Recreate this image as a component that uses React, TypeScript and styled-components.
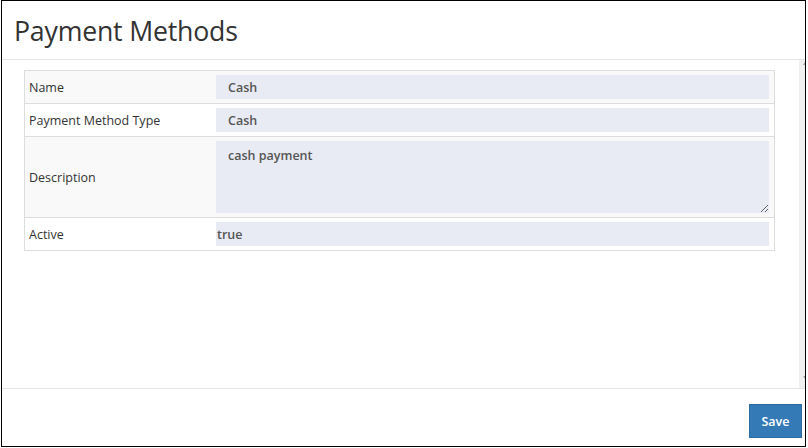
import styled, { createGlobalStyle } from "styled-components";

const GlobalStyle = createGlobalStyle`
  html, body {
    margin: 0;
    padding: 0;
    background: #fff;
  }
  body {
    font-family: "Open Sans", "Noto Sans", sans-serif;
    color: #333;
  }
`;

const fields = [
  { label: "Name", value: "Cash" },
  { label: "Payment Method Type", value: "Cash" },
];

const App = () => {
  return (
    <>
      <GlobalStyle />
      <Frame>
        <Header>
          <Title>Payment Methods</Title>
        </Header>
        <Body>
          <Content>
            <Table>
              <tbody>
                {fields.map((f, i) => (
                  <Row key={f.label} striped={i % 2 === 0}>
                    <LabelCell>{f.label}</LabelCell>
                    <ValueCell>
                      <TextInput readOnly value={f.value} />
                    </ValueCell>
                  </Row>
                ))}
                <Row striped>
                  <LabelCell>Description</LabelCell>
                  <ValueCell>
                    <TextArea readOnly value="cash payment" />
                  </ValueCell>
                </Row>
                <Row striped={false}>
                  <LabelCell>Active</LabelCell>
                  <ValueCell>
                    <TextInput readOnly value="true" flush />
                  </ValueCell>
                </Row>
              </tbody>
            </Table>
          </Content>
          <ScrollTrack>
            <Arrow up />
            <Arrow />
          </ScrollTrack>
        </Body>
        <Footer>
          <SaveButton>Save</SaveButton>
        </Footer>
      </Frame>
    </>
  );
};

export default App;

const Frame = styled.div`
  margin-left: 1px;
  width: 803px;
  height: 445px;
  border: 1px solid #000;
  display: flex;
  flex-direction: column;
  background: #fff;
`;

const Header = styled.div`
  height: 58px;
  border-bottom: 1px solid #e5e5e5;
  display: flex;
  align-items: center;
  padding-left: 12px;
`;

const Title = styled.h1`
  margin: 0;
  font-size: 26.7px;
  font-weight: 400;
  color: #333;
  letter-spacing: -0.2px;
`;

const Body = styled.div`
  flex: 1;
  display: flex;
  min-height: 0;
`;

const Content = styled.div`
  flex: 1;
  padding: 10px 0 0 22px;
`;

const Table = styled.table`
  width: 751px;
  border-collapse: collapse;
  border: 1px solid #ddd;
  font-size: 12.5px;
`;

const Row = styled.tr<{ striped: boolean }>`
  background: ${({ striped }) => (striped ? "#f9f9f9" : "#fff")};
  border-top: 1px solid #ddd;
`;

const LabelCell = styled.td`
  width: 183px;
  padding: 4px;
  color: #333;
  vertical-align: middle;
`;

const ValueCell = styled.td`
  padding: 4px 5px 4px 0;
`;

const TextInput = styled.input<{ flush?: boolean }>`
  display: block;
  box-sizing: border-box;
  width: 553px;
  height: 24px;
  border: none;
  outline: none;
  background: #e8ebf3;
  padding: 0 0 0 ${({ flush }) => (flush ? "1px" : "12px")};
  font-family: "Open Sans", "Noto Sans", sans-serif;
  font-size: 12.5px;
  font-weight: 600;
  color: #555;
`;

const TextArea = styled.textarea`
  display: block;
  box-sizing: border-box;
  width: 553px;
  height: 72px;
  border: none;
  outline: none;
  background: #e8ebf3;
  padding: 6px 12px;
  font-family: "Open Sans", "Noto Sans", sans-serif;
  font-size: 12.5px;
  font-weight: 600;
  color: #555;
  resize: vertical;
`;

const ScrollTrack = styled.div`
  width: 6px;
  background: #f0f0f0;
  display: flex;
  flex-direction: column;
  justify-content: space-between;
  align-items: flex-end;
  padding: 2px 0 9px;
`;

const Arrow = styled.div<{ up?: boolean }>`
  width: 0;
  height: 0;
  border-left: 2px solid transparent;
  border-right: 0 solid transparent;
  ${({ up }) =>
    up ? "border-bottom: 3px solid #a0a0a0;" : "border-top: 3px solid #a0a0a0;"}
`;

const Footer = styled.div`
  height: 58px;
  border-top: 1px solid #e5e5e5;
  display: flex;
  justify-content: flex-end;
  align-items: flex-start;
  padding: 15px 3px 0 0;
  box-sizing: border-box;
`;

const SaveButton = styled.button`
  width: 53px;
  height: 34px;
  background: #337ab7;
  border: 1px solid #2e6da4;
  color: #fff;
  font-family: "Open Sans", "Noto Sans", sans-serif;
  font-size: 12.5px;
  font-weight: 600;
  cursor: pointer;
  padding: 0;
`;
